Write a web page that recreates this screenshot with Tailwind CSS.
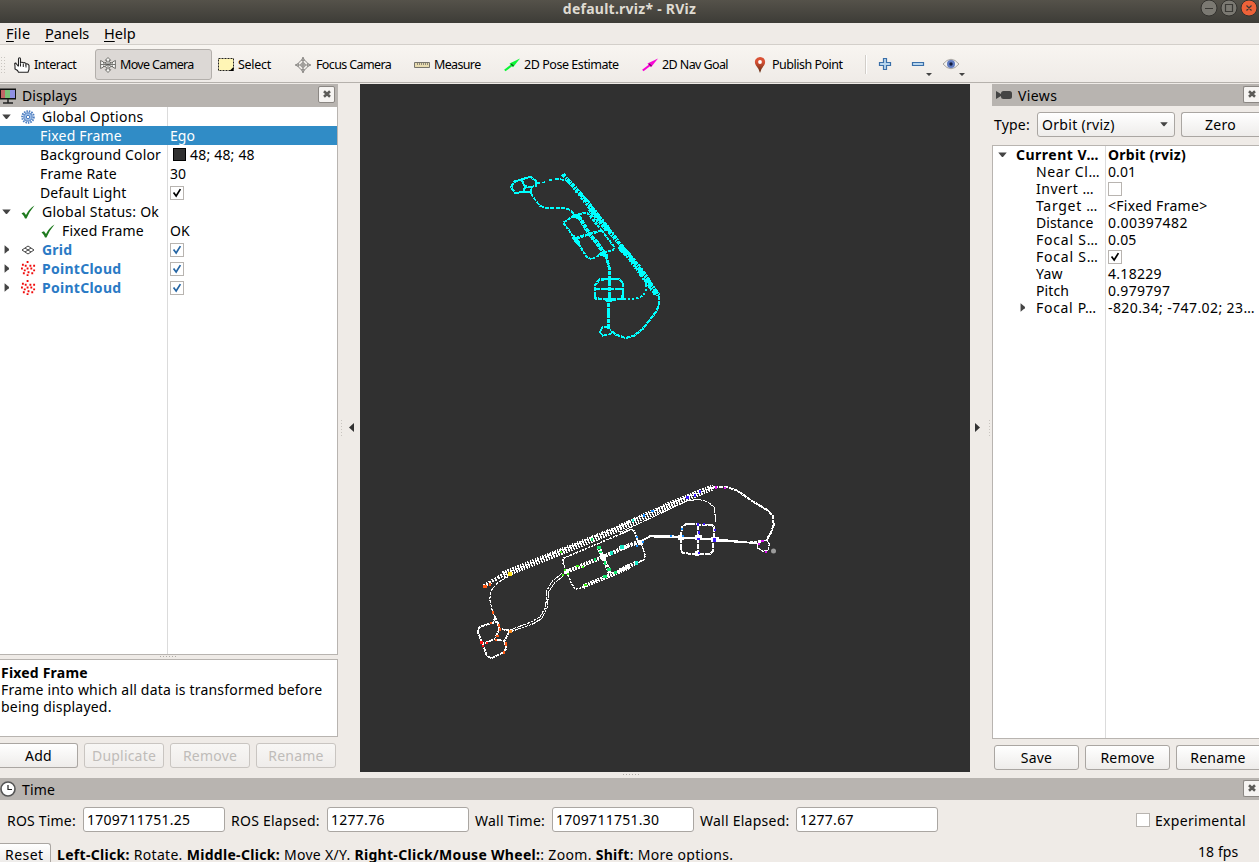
<!DOCTYPE html>
<html lang="en">
<head>
<meta charset="utf-8">
<title>default.rviz* - RViz</title>
<script src="https://cdn.jsdelivr.net/npm/@tailwindcss/browser@4"></script>
</head>
<body class="w-[1259px] h-[862px] overflow-hidden bg-[#efebe7] font-['Noto_Sans',sans-serif] text-[14px] text-black whitespace-nowrap">
<svg class="hidden">
  <symbol id="close" viewBox="0 0 8 8"><path d="M1 1.3 7 6.7M7 1.3 1 6.7" stroke="#5c5b58" stroke-width="2.6"/></symbol>
  <symbol id="down" viewBox="0 0 10 6"><path d="M.3 .3h9.4L5.8 5q-.8.6-1.6 0z" fill="#444"/></symbol>
  <symbol id="right" viewBox="0 0 6 10"><path d="M.3 .3v9.4L5 5.8q.6-.8 0-1.6z" fill="#444"/></symbol>
  <symbol id="tick" viewBox="0 0 14 14"><path d="M3 6.500 6 10.500 11 2.500" fill="none" stroke="currentColor" stroke-width="2"/></symbol>
  <symbol id="ok" viewBox="0 0 14 14"><path d="M.5 8.3 3 7.2 5 10Q8 4 13.5.6 8.5 6.5 5.5 13.4L4 13.4Q2.6 10.3.5 8.3z" fill="#1e7a1e"/></symbol>
  <symbol id="cloud" viewBox="0 0 16 16"><path d="M6 0h2v2H6zM1 3h2v2H1zM4 4h2v2H4zM9 4h2v2H9zM13 4h2v2h-2zM0 7h2v2H0zM6 7h2v2H6zM10 7h2v2h-2zM3 9h2v2H3zM13 9h2v2h-2zM7 11h2v2H7zM11 12h2v2h-2zM2 12h2v2H2zM6 14h2v2H6z" fill="#f00a0a"/></symbol>
</svg>
<div class="flex flex-col w-[1259px] h-[862px]">
  <!-- title bar -->
  <div class="relative h-[23px] shrink-0 bg-linear-to-b from-[#55524a] to-[#3d3c37] text-[#dfdbd2] font-bold text-center">
    <div class="leading-[17px] text-[14px] tracking-[0.25px]">default.rviz* - RViz</div>
    <svg class="absolute left-[1200px] top-0 w-[59px] h-[18px]" viewBox="0 0 59 18">
      <circle cx="9" cy="8" r="8" fill="#7b7972" stroke="#33322e"/><circle cx="29" cy="8" r="8" fill="#7b7972" stroke="#33322e"/><circle cx="49" cy="8" r="8" fill="#ee6239" stroke="#33322e"/>
      <path d="M5 8.5h8M25.5 4.5h7v7h-7zM46.500 5.500l5 5M51.500 5.500l-5 5" fill="none" stroke="#3a3935" stroke-width="1.2"/>
    </svg>
  </div>
  <!-- menu -->
  <div class="flex h-[22px] shrink-0 border-b border-[#d3cfca] text-[14.500px] leading-[21px] pl-[6px] underline-offset-2">
    <span class="w-[39px] tracking-[0.3px]"><u>F</u>ile</span><span class="w-[59px] tracking-[-0.1px]"><u>P</u>anels</span><span><u>H</u>elp</span>
  </div>
  <!-- toolbar -->
  <div class="flex items-center h-[38px] shrink-0 pt-[2px] border-b border-[#b5b1ac] bg-linear-to-b from-[#f8f5f1] to-[#efebe7] text-[12.500px]">
    <svg class="w-[14px] h-[18px] shrink-0"><path d="M1.500 1v17M4.500 1v17" stroke="#c9c5c0" stroke-dasharray="1 2"/></svg>
    <div class="flex items-center gap-1 w-[81px] shrink-0 tracking-[-0.45px]">
      <svg class="w-4 h-4 shrink-0" viewBox="0 0 16 16"><path d="M4.500 9V2Q4.500.7 5.500.7T6.500 2V6.500Q6.500 5 8 5.200T9.300 6.500Q9.500 5.500 10.800 5.700T12 7.200Q12.500 6.500 13.600 7T15 8.500V12.500L14 15.300H4.500L3.500 13.500 1 12V9.500L.7 6.500Q1.500 5.500 2.500 7L4.500 9.500" fill="#fff" stroke="#222" stroke-width="1.100"/><path d="M6.500 6.500v3M9.300 7v3M12 7.500v3" stroke="#222"/></svg>
      <span class="pt-px">Interact</span></div>
    <div class="flex items-center gap-1 w-[117px] h-[31px] shrink-0 pl-1 border border-[#b3afab] rounded-[3px] bg-[#dcd8d5] tracking-[-0.65px]">
      <svg class="w-4 h-4 shrink-0" viewBox="0 0 16 16" fill="#f6f6f4" stroke="#555552" stroke-width=".8"><path d="M8 .5 10.700 3.300H9.200V6H12.500V4.500L.5 3 3.500 6H6.800V3.300H5.300z" stroke="none" fill="none"/><path d="M.6 3.500 3.500 5V6.300L6.800 5V3.300H5.300L8 .5l2.700 2.800H9.200V5l3.300 1.300V5l2.900-1.500v8L12.500 10V8.800L9.200 10.500v2.200h1.500L8 15.500l-2.700-2.800h1.500v-2.200L3.500 8.800V10L.6 11.500z"/><path d="M.8 7.500h14.400M4.500 5.800l7 3.600M11.500 5.800l-7 3.600M8 4v8"/></svg>
      <span class="pt-px">Move Camera</span></div>
    <div class="flex items-center gap-1 w-[83px] pl-1.5 shrink-0 tracking-[-0.3px]">
      <svg class="w-4 h-4 shrink-0" viewBox="0 0 16 16"><path d="M.5 1.500h15v12H.5z" fill="#fff5b5" stroke="#222" stroke-dasharray="2 1"/><path d="M15.500 10v4h-4z"/></svg>
      <span class="pt-px">Select</span></div>
    <div class="flex items-center gap-[5px] w-[119px] shrink-0 tracking-[-0.62px]">
      <svg class="w-4 h-4 shrink-0" viewBox="0 0 16 16" fill="none" stroke="#8b8986"><circle cx="8" cy="8" r="4.800"/><circle cx="8" cy="8" r="2.200"/><path d="M8 0v16M0 8h16" stroke-width="1.200"/><path d="M6.500 3 8 .5 9.500 3M6.500 13 8 15.500 9.500 13M3 6.500.5 8 3 9.500M13 6.500 15.500 8 13 9.500"/></svg>
      <span class="pt-px">Focus Camera</span></div>
    <div class="flex items-center gap-1 w-[90px] shrink-0 tracking-[-0.65px]">
      <svg class="w-4 h-4 shrink-0" viewBox="0 0 16 16"><path d="M.5 5.500h15v5H.5z" fill="#e8dcb0" stroke="#77746c"/><path d="M3.500 6v2M5.500 6v2M7.500 6v2M9.500 6v2M11.500 6v2M13.500 6v2" stroke="#77746c" stroke-width=".8"/></svg>
      <span class="pt-px">Measure</span></div>
    <div class="flex items-center gap-1 w-[138px] shrink-0 tracking-[-0.45px]">
      <svg class="w-4 h-4 shrink-0" viewBox="0 0 16 16"><path d="M.8 13.500 8 8" stroke="#0cf536" stroke-width="2.200"/><path d="M5.500 6.500 16 1.500 9 10.200z" fill="#0cf536"/><path d="M7 7l2.500 2" stroke="#145b20" stroke-width="1.500"/></svg>
      <span class="pt-px">2D Pose Estimate</span></div>
    <div class="flex items-center gap-1 w-[110px] shrink-0 tracking-[-0.6px]">
      <svg class="w-4 h-4 shrink-0" viewBox="0 0 16 16"><path d="M.8 13.500 8 8" stroke="#f705d5" stroke-width="2.200"/><path d="M5.500 6.500 16 1.500 9 10.200z" fill="#f705d5"/><path d="M7 7l2.500 2" stroke="#6c1060" stroke-width="1.500"/></svg>
      <span class="pt-px">2D Nav Goal</span></div>
    <div class="flex items-center gap-1 w-[113px] shrink-0 tracking-[-0.5px]">
      <svg class="w-4 h-4 shrink-0" viewBox="0 0 16 16"><defs><linearGradient id="pin" x2="0" y2="1"><stop offset=".3" stop-color="#d95135"/><stop offset="1" stop-color="#5a2c12"/></linearGradient></defs><path d="M8 16Q6.800 11.500 4 8.500 2 5.500 3.500 2.500 5 0 8 0t4.500 2.500Q14 5.500 12 8.500 9.200 11.500 8 16z" fill="url(#pin)"/><circle cx="8" cy="5" r="1.900" fill="#fff"/></svg>
      <span class="pt-px">Publish Point</span></div>
    <div class="w-[2px] h-[19px] shrink-0 border-l border-[#d2cec9] bg-white"></div>
    <svg class="w-[100px] h-[26px] shrink-0" viewBox="867 52 100 26">
      <path d="M883.500 58.500h3v4h4v3h-4v4h-3v-4h-4v-3h4zM912.500 62.500h11v3h-11z" fill="#b8d6ee" stroke="#3a6fa9" stroke-width="1.200"/>
      <path d="M926 73h6l-3 3zM959 73h6l-3 3z" fill="#444"/>
      <path d="M943 64Q951 54.500 959 64 951 73.500 943 64z" fill="#f2f1ef" stroke="#a7a4a0"/><circle cx="951" cy="64" r="4" fill="#607bc0"/><circle cx="951" cy="64" r="1.700" fill="#101a3c"/>
    </svg>
  </div>
  <!-- docks and 3D view -->
  <div class="flex h-[695px] shrink-0 pt-px">
    <div class="w-[338px] shrink-0 flex flex-col">
      <div class="flex items-center h-[23px] shrink-0 bg-[#b8b4b0] pr-[3px]">
        <svg class="w-4 h-4 mr-[6px]" viewBox="0 0 16 16"><path d="M0 .5h16v11H0z" fill="#111"/><path d="M1 2h4v8H1z" fill="#bf6566"/><path d="M5 2h5v8H5z" fill="#79c077"/><path d="M10 2h5v8h-5z" fill="#8f8fe3"/><path d="M8 11v4M3 15h10" stroke="#222" stroke-width="1.500"/></svg>
        <span class="grow tracking-[0.1px]">Displays</span>
        <span class="flex items-center justify-center w-[17px] h-[17px] border border-[#8b8783] rounded-[2px] bg-[#f6f4f2] mb-[3px]"><svg class="w-2 h-2"><use href="#close"/></svg></span>
      </div>
      <div class="relative h-[548px] shrink-0 bg-white border-r border-b border-[#b8b4b0] leading-[19px]">
        <div class="absolute left-[167px] top-0 w-px h-full bg-[#dbdbdb]"></div>
        <div class="relative flex items-center h-[19px]"><svg class="w-[9px] h-[6px] ml-[2px] mr-[10px]"><use href="#down"/></svg>
          <svg class="w-[14px] h-[14px] mr-[7px]" viewBox="0 0 14 14" fill="none" stroke="#4c7dc0"><circle cx="7" cy="7" r="5.800" stroke-width="2" stroke-dasharray="1.500 1"/><circle cx="7" cy="7" r="4.200" fill="#9bbce6"/><circle cx="7" cy="7" r="1.700" fill="#fff"/></svg><span class="tracking-[0.25px]">Global Options</span></div>
        <div class="relative flex h-[19px] bg-[#308cc6] text-white pl-[40px]"><span class="w-[130px] tracking-[0.2px]">Fixed Frame</span><span>Ego</span></div>
        <div class="relative flex items-center h-[19px] pl-[40px]"><span class="w-[133px] tracking-[0.16px]">Background Color</span><span class="w-[13px] h-[13px] bg-[#303030] border border-black mr-1"></span><span class="tracking-[0.2px]">48; 48; 48</span></div>
        <div class="relative flex h-[19px] pl-[40px]"><span class="w-[130px] tracking-[0.2px]">Frame Rate</span><span>30</span></div>
        <div class="relative flex items-center h-[19px] pl-[40px]"><span class="w-[130px] tracking-[0.1px]">Default Light</span><svg class="w-[14px] h-[14px] border border-[#b8b4b0]"><use href="#tick"/></svg></div>
        <div class="relative flex items-center h-[19px]"><svg class="w-[9px] h-[6px] ml-[2px] mr-[10px]"><use href="#down"/></svg><svg class="w-[14px] h-[14px] mr-[7px]"><use href="#ok"/></svg><span class="tracking-[0.25px]">Global Status: Ok</span></div>
        <div class="relative flex items-center h-[19px] pl-[41px]"><svg class="w-[14px] h-[14px] mr-[7px]"><use href="#ok"/></svg><span class="w-[108px] tracking-[0.2px]">Fixed Frame</span><span>OK</span></div>
        <div class="relative flex items-center h-[19px]"><svg class="w-[6px] h-[9px] ml-[4px] mr-[11px]"><use href="#right"/></svg>
          <svg class="w-[14px] h-[10px] mr-[7px]" viewBox="0 0 14 10" fill="none" stroke="#444"><path d="M1 5 7 1l6 4-6 4zM4 3l6 4M10 3 4 7"/></svg><span class="w-[128px] font-bold text-[#2a7ac5] tracking-[0.2px]">Grid</span><svg class="w-[14px] h-[14px] border border-[#b8b4b0] text-[#2465a4]"><use href="#tick"/></svg></div>
        <div class="relative flex items-center h-[19px]"><svg class="w-[6px] h-[9px] ml-[4px] mr-[11px]"><use href="#right"/></svg><svg class="w-[15px] h-[15px] mr-[6px]"><use href="#cloud"/></svg><span class="w-[128px] font-bold text-[#2a7ac5] tracking-[0.27px]">PointCloud</span><svg class="w-[14px] h-[14px] border border-[#b8b4b0] text-[#2465a4]"><use href="#tick"/></svg></div>
        <div class="relative flex items-center h-[19px]"><svg class="w-[6px] h-[9px] ml-[4px] mr-[11px]"><use href="#right"/></svg><svg class="w-[15px] h-[15px] mr-[6px]"><use href="#cloud"/></svg><span class="w-[128px] font-bold text-[#2a7ac5] tracking-[0.27px]">PointCloud</span><svg class="w-[14px] h-[14px] border border-[#b8b4b0] text-[#2465a4]"><use href="#tick"/></svg></div>
      </div>
      <svg class="w-[338px] h-[4px] shrink-0"><path d="M160 1.500h17" stroke="#b0aca7" stroke-dasharray="1 2"/></svg>
      <div class="h-[78px] shrink-0 bg-white border-y border-r border-[#b8b4b0] pt-[4px] pl-[1px] leading-[17px] tracking-[0.2px]">
        <div class="font-bold">Fixed Frame</div>
        <div>Frame into which all data is transformed before</div>
        <div>being displayed.</div>
      </div>
      <div class="flex gap-[6px] mt-[6px] h-[25px] text-center leading-[23px] text-[#bfbcb9] tracking-[0.2px]">
        <div class="w-[78px] border border-l-0 border-[#aaa6a2] rounded-r-[3px] bg-linear-to-b from-white to-[#eeecea] text-black">Add</div>
        <div class="w-[80px] border border-[#c9c5c1] rounded-[3px] bg-linear-to-b from-[#f8f7f5] to-[#efecea]">Duplicate</div>
        <div class="w-[80px] border border-[#c9c5c1] rounded-[3px] bg-linear-to-b from-[#f8f7f5] to-[#efecea]">Remove</div>
        <div class="w-[80px] border border-[#c9c5c1] rounded-[3px] bg-linear-to-b from-[#f8f7f5] to-[#efecea]">Rename</div>
      </div>
    </div>
    <div class="flex items-center w-[22px] h-[688px] shrink-0 pl-[3px]"><svg class="w-[16px] h-[18px]"><path d="M.5 1v17" stroke="#c9c5c0" stroke-dasharray="1 2"/><path d="M13 4v9L8 8.500z" fill="#333"/></svg></div>
    <div class="w-[610px] h-[688px] shrink-0 bg-[#303030]">
      <svg class="w-[610px] h-[688px]" viewBox="360 84 610 688" fill="none" shape-rendering="crispEdges">
        <!-- cyan cloud -->
        <g transform="translate(500 165) scale(.33333)" stroke="#00ffff" stroke-width="5.500">
          <path d="M188 28 225 68 262 112 290 150 322 192 350 226 378 260 410 300 440 340 476 392" stroke-width="12" stroke-dasharray="10 3 5 2"/>
          <path d="M205 50 240 95 280 145M232 72 272 118 318 178 352 222M275 150 300 192M355 245 405 302 436 348 465 390M368 246 418 300 448 345" stroke-width="6" stroke-dasharray="7 5"/>
          <path d="M270 130 322 192M360 244 385 272" stroke-width="19" stroke-dasharray="9 3"/>
          <path d="M385 272 425 326 470 388" stroke-width="17" stroke-dasharray="4 4"/>
          <path d="M476 392 478 412 470 438 445 470 428 492 402 512 376 519 348 509 330 495" stroke-width="6.500" stroke-dasharray="14 2"/>
          <path d="M440 345 438 375 430 392 408 401 370 403" stroke-dasharray="7 6"/>
          <path d="M110 54 135 52M148 44h9M166 41 188 44 208 50" stroke-dasharray="11 4"/>
          <path d="M33 66 43 51 65 43 92 36 108 48 108 62 94 66 92 82 73 80 45 84 33 66M65 43 75 64 94 66M75 64 72 80M43 51 48 47" stroke-width="6.500" stroke-dasharray="14 1.500"/>
          <path d="M92 84 108 108 120 123 143 130 170 129 185 128 212 135 222 148" stroke-dasharray="12 4"/>
          <path d="M222 150 262 143 290 180M222 152 190 173 230 228 260 276 275 283 306 266 340 254 342 245 306 197" stroke-width="6" stroke-dasharray="10 3"/>
          <path d="M222 150 240 160 268 207 290 232 316 270" stroke-width="12" stroke-dasharray="12 2"/>
          <path d="M228 220 268 207 306 196" stroke-width="8" stroke-dasharray="11 3"/>
          <path d="M219 215 238 238M298 265 322 273M218 152h22" stroke-width="12"/>
          <path d="M318 270 328 310 330 340 328 400 326 430 325 493" stroke-width="9" stroke-dasharray="14 2"/>
          <path d="M328 342 298 344 286 360 286 400 325 404 370 402 368 352 355 342 328 342M288 373H368" stroke-width="7" stroke-dasharray="12 2"/>
          <path d="M317 404h20M362 397h10" stroke-width="12"/>
          <path d="M326 487 308 487 299 500 308 512 328 508 338 502" stroke-dasharray="14 2"/>
        </g>
        <!-- white cloud, western part -->
        <g transform="translate(470 480) scale(.33333)" stroke="#fff" stroke-width="3.500">
          <path d="M40 319 110 278" stroke-width="11" stroke-dasharray="6 4"/>
          <path d="M100 284 300 204 450 144" stroke-width="20" stroke-dasharray="4.500 3.500"/>
          <path d="M120 275 300 200 450 139" stroke-width="4" stroke-dasharray="5 3"/>
          <path d="M115 289 85 307 64 330 59 358 69 400 76 412" stroke-dasharray="10 2"/>
          <path d="M480 150 280 235 278 246 290 275 304 310 315 327 330 325 400 294 480 260" stroke-width="4.500" stroke-dasharray="7 3"/>
          <path d="M290 275 400 230 480 195" stroke-width="12" stroke-dasharray="6 3"/>
          <path d="M340 320 415 288 480 260" stroke-width="13" stroke-dasharray="5 3"/>
          <path d="M385 200 398 230 420 280" stroke-width="12" stroke-dasharray="7 3"/>
          <path d="M282 275h16M392 230h16" stroke-width="16"/>
          <path d="M275 281 248 303 231 330 227 382 210 410 184 426 120 450" stroke-width="3.200" stroke-dasharray="9 2"/>
          <path d="M281 287 255 308 236 335 232 383 215 416 188 432 122 455" stroke-width="3.200" stroke-dasharray="9 2"/>
          <path d="M75 410 82 426 64 429 28 441 23 455 38 492 50 527 63 535 100 517 109 505 103 483 74 478 40 490M82 426 88 446 120 452 103 483M88 446 76 474M76 410 70 426" stroke-width="5.500" stroke-dasharray="12 2"/>
        </g>
        <!-- white cloud, eastern part -->
        <g transform="translate(620 475) scale(.33333)" stroke="#fff" stroke-width="5">
          <path d="M0 158 80 121 160 85 250 48 280 38" stroke-width="19" stroke-dasharray="4.500 3.500"/>
          <path d="M0 153 160 81 270 40" stroke-width="4" stroke-dasharray="5 3"/>
          <path d="M0 172 120 116 200 78 235 73 263 80 283 97 287 140" stroke-width="3.200" stroke-dasharray="14 1"/>
          <path d="M265 38 320 36 350 46 400 80 445 107 459 124 461 150 452 175 440 194" stroke-width="6" stroke-dasharray="14 1.500"/>
          <path d="M0 178 30 163 43 168 52 195 65 210 76 242 70 256 45 265" stroke-dasharray="8 2"/>
          <path d="M0 285 50 263" stroke-width="12" stroke-dasharray="6 3"/>
          <path d="M0 220 60 200" stroke-width="13" stroke-dasharray="8 3"/>
          <path d="M55 203 90 184 185 188 280 192 380 202" stroke-width="6"/>
          <path d="M98 183h65M290 196 340 199M275 196 410 205" stroke-width="4"/>
          <path d="M184 188 185 156 197 148 275 149 283 156V185M184 188 182 225 190 235 270 238 280 228V195M234 149V238" stroke-width="6" stroke-dasharray="17 2"/>
          <path d="M225 188h20M175 188h18M272 193h24M53 202h16M225 236h13" stroke-width="14"/>
          <path d="M380 202 410 204 414 220 430 230 445 224 448 207 440 195 425 198 411 207M390 200 424 198" stroke-width="4" stroke-dasharray="10 1.500"/>
        </g>
        <!-- points coloured by intensity -->
        <g>
          <path d="M483 585h4v3h-4zM489 583h2v3h-2zM492 611h2v3h-2zM490 622h2v2h-2zM498 624h2v3h-2zM499 628h2v3h-2zM496 635h3v2h-3zM505 642h2v4h-2zM503 651h2v3h-2zM495 639h2v2h-2z" fill="#ff5a14"/><path d="M509 630h3v3h-3z" fill="#ff8c1e"/><path d="M480 641h3v3h-3zM482 645h2v2h-2zM486 642h2v2h-2z" fill="#ff1010"/>
          <path d="M508 572h4v4h-4z" fill="#ffe11a"/><path d="M560 551h2v2h-2zM564 569h2v2h-2zM562 574h2v2h-2zM567 573h2v2h-2zM576 565h3v2h-3zM582 566h2v2h-2zM584 584h3v2h-3z" fill="#3cf514"/>
          <path d="M591 538h2v3h-2zM597 546h4v3h-4zM599 551h3v2h-3zM604 561h2v4h-2zM607 568h4v3h-4zM603 575h4v3h-4zM594 558h2v3h-2zM614 571h3v3h-3z" fill="#10e66c"/>
          <path d="M610 551h3v4h-3zM620 545h4v4h-4zM635 561h3v4h-3zM632 519h2v3h-2z" fill="#18e6c6"/>
          <path d="M636 536h2v2h-2zM636 545h2v2h-2zM642 541h2v2h-2zM643 514h2v3h-2zM651 510h3v2h-3zM670 535h2v2h-2zM681 528h2v2h-2zM682 535h2v2h-2z" fill="#168dff"/>
          <path d="M686 496h3v3h-3zM694 494h2v3h-2zM699 490h2v3h-2zM697 523h2v3h-2zM703 523h2v2h-2zM698 531h2v3h-2zM697 538h3v2h-3zM714 529h2v2h-2zM713 538h3v4h-3zM698 552h2v2h-2z" fill="#3a18ff"/>
          <path d="M715 486h2v3h-2zM724 487h2v2h-2zM761 540h3v2h-3zM758 543h2v2h-2zM765 551h2v2h-2z" fill="#d912ef"/>
          <circle cx="773.500" cy="551" r="2.500" fill="#9b9b9b" shape-rendering="auto"/>
        </g>
      </svg>
    </div>
    <div class="flex items-center w-[22px] h-[688px] shrink-0 pl-[3px]"><svg class="w-[18px] h-[18px]"><path d="M16.500 1v17" stroke="#c9c5c0" stroke-dasharray="1 2"/><path d="M2 4v9l5-4.500z" fill="#333"/></svg></div>
    <div class="w-[267px] shrink-0 flex flex-col">
      <div class="flex items-center h-[22px] shrink-0 bg-[#b8b4b0] pl-1">
        <svg class="w-4 h-[10px] mr-[6px]" viewBox="0 0 16 10" fill="#444"><rect x="5" y="1" width="11" height="8" rx="2.500"/><path d="M0 1l5 3v2L0 9z"/></svg>
        <span class="grow pt-px tracking-[0.4px]">Views</span>
        <span class="flex items-center justify-center w-[16px] h-[17px] border border-r-0 border-[#8b8783] rounded-l-[2px] bg-[#f6f4f2] mb-[2px]"><svg class="w-2 h-2"><use href="#close"/></svg></span>
      </div>
      <div class="flex h-[25px] mt-[6px] shrink-0 pl-[2px] leading-[23px]">
        <span class="w-[43px] leading-[25px] tracking-[0.2px]">Type:</span>
        <div class="flex items-center justify-between w-[138px] border border-[#aaa6a2] rounded-[3px] bg-linear-to-b from-white to-[#eeecea] pl-1 pr-[6px]"><span class="tracking-[0.3px]">Orbit (rviz)</span><svg class="w-[8px] h-[5px]" viewBox="0 0 10 6"><use href="#down"/></svg></div>
        <div class="w-[78px] ml-[6px] border border-r-0 border-[#aaa6a2] rounded-l-[3px] bg-linear-to-b from-white to-[#eeecea] text-center tracking-[0.3px]">Zero</div>
      </div>
      <div class="relative h-[594px] mt-[8px] shrink-0 bg-white border border-r-0 border-[#b8b4b0] leading-[17px]">
        <div class="absolute left-[112px] top-0 w-px h-full bg-[#dbdbdb]"></div>
        <div class="relative flex items-center h-[17px] font-bold"><svg class="w-[9px] h-[6px] ml-[5px] mr-[9px]"><use href="#down"/></svg><span class="w-[92px] tracking-[0.5px]">Current V…</span><span class="tracking-[0.25px]">Orbit (rviz)</span></div>
        <div class="relative flex h-[17px] pl-[43px]"><span class="w-[72px] tracking-[0.6px]">Near Cl…</span><span class="tracking-[0.1px]">0.01</span></div>
        <div class="relative flex items-center h-[17px] pl-[43px]"><span class="w-[72px] tracking-[0.5px]">Invert …</span><span class="w-[14px] h-[14px] border border-[#b8b4b0]"></span></div>
        <div class="relative flex h-[17px] pl-[43px]"><span class="w-[72px] tracking-[0.7px]">Target …</span><span class="tracking-[0.28px]">&lt;Fixed Frame&gt;</span></div>
        <div class="relative flex h-[17px] pl-[43px]"><span class="w-[72px] tracking-[0.1px]">Distance</span><span class="tracking-[0.4px]">0.00397482</span></div>
        <div class="relative flex h-[17px] pl-[43px]"><span class="w-[72px] tracking-[0.8px]">Focal S…</span><span class="tracking-[0.2px]">0.05</span></div>
        <div class="relative flex items-center h-[17px] pl-[43px]"><span class="w-[72px] tracking-[0.8px]">Focal S…</span><svg class="w-[14px] h-[14px] border border-[#b8b4b0]"><use href="#tick"/></svg></div>
        <div class="relative flex h-[17px] pl-[43px]"><span class="w-[72px] tracking-[0.2px]">Yaw</span><span class="tracking-[0.3px]">4.18229</span></div>
        <div class="relative flex h-[17px] pl-[43px]"><span class="w-[72px] tracking-[0.1px]">Pitch</span><span class="tracking-[0.3px]">0.979797</span></div>
        <div class="relative flex items-center h-[17px]"><svg class="w-[6px] h-[9px] ml-[27px] mr-[10px]"><use href="#right"/></svg><span class="w-[72px] tracking-[0.7px]">Focal P…</span><span class="tracking-[0.4px]">-820.34; -747.02; 23…</span></div>
      </div>
      <div class="flex gap-[6px] mt-[6px] pl-[2px] h-[25px] text-center leading-[23px] tracking-[0.2px]">
        <div class="w-[85px] shrink-0 border border-[#aaa6a2] rounded-[3px] bg-linear-to-b from-white to-[#eeecea]">Save</div>
        <div class="w-[85px] shrink-0 border border-[#aaa6a2] rounded-[3px] bg-linear-to-b from-white to-[#eeecea]">Remove</div>
        <div class="w-[83px] shrink-0 border border-r-0 border-[#aaa6a2] rounded-l-[3px] bg-linear-to-b from-white to-[#eeecea]">Rename</div>
      </div>
    </div>
  </div>
  <!-- time dock -->
  <div class="relative flex items-center h-[22px] shrink-0 bg-[#b8b4b0]">
    <svg class="absolute left-[622px] -top-[5px] w-[18px] h-[3px]"><path d="M1 1.500h17" stroke="#b0aca7" stroke-dasharray="1 2"/></svg>
    <svg class="w-4 h-4 mr-[6px]" viewBox="0 0 16 16"><circle cx="8" cy="8" r="7" fill="#fff" stroke="#555" stroke-width="1.600"/><path d="M8 4v4.500h4" fill="none" stroke="#222" stroke-width="1.200"/></svg>
    <span class="grow tracking-[0.2px]">Time</span>
    <span class="flex items-center justify-center w-[16px] h-[17px] border border-r-0 border-[#8b8783] rounded-l-[2px] bg-[#f6f4f2] mb-[2px]"><svg class="w-2 h-2"><use href="#close"/></svg></span>
  </div>
  <div class="flex h-[25px] mt-[7px] shrink-0 pl-[7px] leading-[27px]">
    <span class="w-[76px] tracking-[0.2px]">ROS Time:</span><div class="w-[142px] pl-[3px] border border-[#aaa6a2] rounded-[3px] bg-white leading-[23px] tracking-[0.27px]">1709711751.25</div>
    <span class="w-[102px] pl-[6px] tracking-[0.25px]">ROS Elapsed:</span><div class="w-[142px] pl-[3px] border border-[#aaa6a2] rounded-[3px] bg-white leading-[23px] tracking-[0.27px]">1277.76</div>
    <span class="w-[83px] pl-[6px] tracking-[0.25px]">Wall Time:</span><div class="w-[142px] pl-[3px] border border-[#aaa6a2] rounded-[3px] bg-white leading-[23px] tracking-[0.27px]">1709711751.30</div>
    <span class="w-[102px] pl-[6px] tracking-[0.25px]">Wall Elapsed:</span><div class="w-[142px] pl-[3px] border border-[#aaa6a2] rounded-[3px] bg-white leading-[23px] tracking-[0.27px]">1277.67</div>
    <span class="w-[14px] h-[14px] ml-[198px] mt-[6px] mr-[5px] border border-[#b8b4b0] bg-white"></span><span class="tracking-[0.3px]">Experimental</span>
  </div>
  <div class="flex h-[19px] mt-[11px] shrink-0 leading-[23px]">
    <div class="w-[51px] h-[19px] pl-[5px] border border-x-0 border-b-0 border-r border-[#aaa6a2] rounded-tr-[3px] bg-linear-to-b from-white to-[#eeecea] tracking-[0.45px] leading-[18px] pt-[2px]">Reset</div>
    <div class="pl-[6px] grow tracking-[0.31px]"><b>Left-Click:</b> Rotate. <b>Middle-Click:</b> Move X/Y. <b>Right-Click/Mouse Wheel:</b>: Zoom. <b>Shift</b>: More options.</div>
    <div class="w-[61px] leading-[18px] tracking-[0.1px]">18 fps</div>
  </div>
</div>
</body>
</html>
